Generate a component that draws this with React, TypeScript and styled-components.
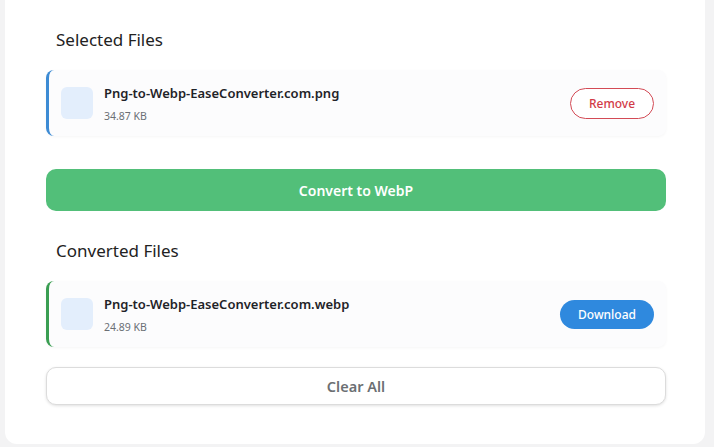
import React from "react";
import styled, { createGlobalStyle } from "styled-components";

const Global = createGlobalStyle`
  html, body { margin: 0; padding: 0; background: #f3f3f4; }
  body { font-family: "Noto Sans", "Open Sans", sans-serif; color: #212529; }
  * { box-sizing: border-box; }
`;

const Page = styled.div`
  padding: 0 9px 3px 5px;
`;

const Card = styled.main`
  width: 700px;
  background: #ffffff;
  border-radius: 0 0 12px 12px;
  padding: 28px 39px 39px 41px;
  display: flex;
  flex-direction: column;
`;

const Section = styled.section`
  display: flex;
  flex-direction: column;
`;

const Heading = styled.h3`
  margin: 0 0 18px;
  padding-left: 10px;
  font-size: 17px;
  line-height: 24px;
  font-weight: 400;
  color: #222;
`;

const Item = styled.div<{ $accent: string }>`
  display: flex;
  align-items: center;
  height: 66px;
  padding: 0 12px 0 12px;
  background: #fcfcfd;
  border-left: 3px solid ${(p) => p.$accent};
  border-radius: 8px;
  box-shadow: 0 1px 3px rgba(0, 0, 0, 0.04);
  gap: 11px;
`;

const Thumb = styled.div`
  width: 32px;
  height: 32px;
  border-radius: 6px;
  background: #e3eefc;
  flex-shrink: 0;
`;

const Info = styled.div`
  display: flex;
  flex-direction: column;
  flex: 1;
  gap: 7px;
  margin-top: 1px;
`;

const Name = styled.div`
  font-size: 13px;
  font-weight: 600;
  color: #1f2328;
  line-height: 18px;
`;

const Size = styled.div`
  font-size: 10.5px;
  color: #6b6f75;
  line-height: 14px;
`;

const SmallButton = styled.button<{ $variant: "outline" | "solid" }>`
  font-family: inherit;
  font-size: 12px;
  font-weight: 500;
  border-radius: 16px;
  cursor: pointer;
  ${(p) =>
    p.$variant === "outline"
      ? `
    width: 84px; height: 31px;
    background: #fff;
    color: #d23b47;
    border: 1px solid #d34a55;
  `
      : `
    width: 94px; height: 29px;
    background: #2f89de;
    color: #fff;
    border: none;
  `}
`;

const ConvertButton = styled.button`
  margin-top: 33px;
  height: 42px;
  border: none;
  border-radius: 10px;
  background: #52bf79;
  color: #fff;
  font-family: inherit;
  font-size: 14px;
  font-weight: 600;
`;

const ConvertedSection = styled(Section)`
  margin-top: 28px;
`;

const ClearButton = styled.button`
  margin-top: 20px;
  height: 38px;
  background: #fff;
  border: 1px solid #dcdcdc;
  border-radius: 10px;
  box-shadow: 0 1px 3px rgba(0, 0, 0, 0.12);
  color: #6c6f73;
  font-family: inherit;
  font-size: 14.5px;
  font-weight: 600;
`;

export default function App() {
  return (
    <Page>
      <Global />
      <Card>
        <Section>
          <Heading>Selected Files</Heading>
          <Item $accent="#3d8bd4">
            <Thumb />
            <Info>
              <Name>Png-to-Webp-EaseConverter.com.png</Name>
              <Size>34.87 KB</Size>
            </Info>
            <SmallButton $variant="outline">Remove</SmallButton>
          </Item>
        </Section>
        <ConvertButton>Convert to WebP</ConvertButton>
        <ConvertedSection>
          <Heading>Converted Files</Heading>
          <Item $accent="#3a9e52">
            <Thumb />
            <Info>
              <Name>Png-to-Webp-EaseConverter.com.webp</Name>
              <Size>24.89 KB</Size>
            </Info>
            <SmallButton $variant="solid">Download</SmallButton>
          </Item>
        </ConvertedSection>
        <ClearButton>Clear All</ClearButton>
      </Card>
    </Page>
  );
}
